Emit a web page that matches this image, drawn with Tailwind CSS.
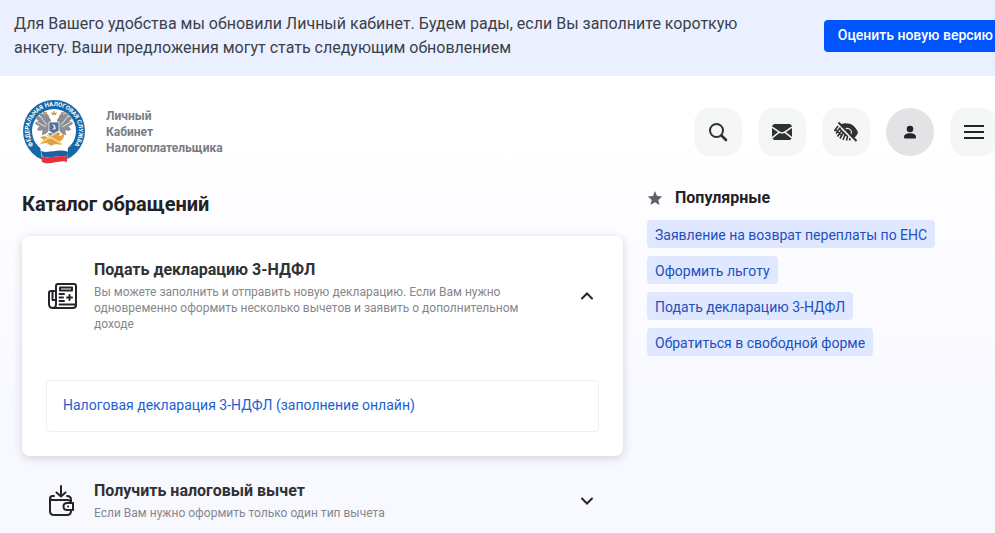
<!DOCTYPE html>
<html lang="ru">
<head>
<meta charset="utf-8">
<meta name="viewport" content="width=device-width, initial-scale=1">
<title>Каталог обращений</title>
<script src="https://cdn.jsdelivr.net/npm/@tailwindcss/browser@4"></script>
</head>
<body class="min-h-screen overflow-hidden bg-linear-to-b from-white from-25% to-[#f8f9ff] to-75% font-[Roboto,'Liberation_Sans',sans-serif] text-[#212224]">

<aside class="flex items-start justify-between bg-[#eaf0ff] pt-3 pb-4 pl-3.5">
  <p class="max-w-[750px] text-base leading-6 text-[#3c4048]">Для Вашего удобства мы обновили Личный кабинет. Будем рады, если Вы заполните короткую анкету. Ваши предложения могут стать следующим обновлением</p>
  <button type="button" class="mt-2 -mr-3 h-8 shrink-0 rounded bg-[#0055ff] px-3.5 pb-0.5 text-sm font-medium whitespace-nowrap text-white">Оценить новую версию</button>
</aside>

<header class="flex items-center justify-between pt-6 pb-5 pl-[22px]">
  <a href="#" class="flex items-center gap-5">
    <svg class="size-16 shrink-0" viewBox="0 0 64 64" role="img" aria-label="Федеральная налоговая служба">
      <defs>
        <path id="ring" d="M14 48.200A24.900 24.900 0 1 1 50 48.200"/>
      </defs>
      <circle cx="32" cy="31" r="31" fill="#1768a8"/>
      <circle cx="32" cy="31" r="22" fill="#fff"/>
      <text font-family="Roboto, 'Liberation Sans', sans-serif" font-size="6" font-weight="700" fill="#fff"><textPath href="#ring" startOffset="50%" text-anchor="middle">ФЕДЕРАЛЬНАЯ НАЛОГОВАЯ СЛУЖБА</textPath></text>
      <g fill="#8b8e94">
        <path d="M29 20c-3-4-8-7-12-7 0 2 1 3 2 4-2-1-4-1-5 0 0 2 1 3 3 4-2 0-3 1-4 2 1 2 3 3 5 3-2 1-2 2-3 4 2 1 4 1 6 0-1 2-1 3-1 5 3 0 6-3 8-6z"/>
        <path d="M35 20c3-4 8-7 12-7 0 2-1 3-2 4 2-1 4-1 5 0 0 2-1 3-3 4 2 0 3 1 4 2-1 2-3 3-5 3 2 1 2 2 3 4-2 1-4 1-6 0 1 2 1 3 1 5-3 0-6-3-8-6z"/>
        <path d="M27 17c0-2-2-4-4-3l-2 2 3 1 1 4h14l1-4 3-1-2-2c-2-1-4 1-4 3l-2 4h-6zM26 33l6 12 6-12z"/>
      </g>
      <path d="M18 16l7 9M15 22l9 5M46 16l-7 9M49 22l-9 5" fill="none" stroke="#e1e3e6" stroke-width="1"/>
      <path d="M29 12l1 3h4l1-3-2 1-1-3-1 3zM21 12h4v2h-4zM39 12h4v2h-4z" fill="#c9a261"/>
      <path d="M27 22h10v9l-5 3-5-3z" fill="#526f9e" stroke="#f5f5f5" stroke-width=".8"/>
      <path d="M30 24l3 1 1 4-4 1 2-3z" fill="#d8dde7"/>
      <path d="M18 37l5-1 5 3 6-6 4 3 5-3-2 6-4 3 3 3-7-1-4 2-4-3-7 1 4-4z" fill="#e5a13b"/>
      <path d="M20 42l17-11M25 35l15 9" fill="none" stroke="#f6d38a" stroke-width="1.5"/>
      <path d="M18 45c8 4 19-3 28 1l-1 16c-8-3-17 3-25-1z" fill="#fff"/>
      <path d="M19 51c8 3 18-3 27 1l-1 5c-9-3-17 3-25-1z" fill="#1861a5"/>
      <path d="M19 56c8 4 18-2 26 1v5c-8-3-17 4-25 0z" fill="#e5313c"/>
    </svg>
    <span class="text-xs leading-4 font-bold text-[#797c83]">Личный<br>Кабинет<br>Налогоплательщика</span>
  </a>
  <nav class="-mr-[3px] flex shrink-0 gap-4" aria-label="Меню">
    <button type="button" aria-label="Поиск" class="grid size-12 place-items-center rounded-2xl bg-[#f5f6f6]">
      <svg class="size-6" viewBox="0 0 24 24" fill="none" stroke="#303132" stroke-width="2" stroke-linecap="round"><circle cx="10.500" cy="10.500" r="6.500"/><path d="M15.500 15.500l4.500 4.500" stroke-width="2.600"/></svg>
    </button>
    <button type="button" aria-label="Сообщения" class="grid size-12 place-items-center rounded-2xl bg-[#f5f6f6]">
      <svg class="size-6" viewBox="0 0 24 24"><path d="M4 4h16l2 2v12l-2 2H4l-2-2V6z" fill="#303132"/><path d="M2 7.200l7 4.700q3 2 6 0l7-4.700M2 17.800l7-5.500M22 17.800l-7-5.500" fill="none" stroke="#f5f6f6" stroke-width="1.500"/></svg>
    </button>
    <button type="button" aria-label="Версия для слабовидящих" class="grid size-12 place-items-center rounded-2xl bg-[#f5f6f6]">
      <svg class="size-6" viewBox="0 0 24 24"><path d="M6 4.500c8-3 15 0 18 8-1 3-3 5-5 6l-2.500-2.500c2-3 2-6-1-7.500-2-1-4-1-5 0z" fill="#303132"/><path d="M11.500 9.500l4.500 4.500 1-2c0-2-3-4-5.500-2.500z" fill="#303132"/><path d="M4 6L.5 11M6.500 7.500L2 13.500M8 10l-4.500 6.500M9.500 12l-3.500 6.500M11 14.500L9 20M13.500 16.500l-1 4M16 18l-.5 2.500M2 10l6 6M5 8l9 9" stroke="#303132" stroke-width="1.600" fill="none"/><path d="M4 4l17 18" stroke="#f5f6f6" stroke-width="1"/><path d="M4.500 2.500l18 18.500" stroke="#303132" stroke-width="2"/></svg>
    </button>
    <button type="button" aria-label="Профиль" class="grid size-12 place-items-center rounded-full bg-[#e3e3e5]">
      <svg class="size-6" viewBox="0 0 24 24" fill="#242528"><circle cx="12" cy="9" r="3.300"/><path d="M6 17.200c0-3 2.500-4 6-4s6 1 6 4q0 1.300-1.200 1.300H7.200Q6 18.500 6 17.200z"/></svg>
    </button>
    <button type="button" aria-label="Открыть меню" class="grid size-12 place-items-center rounded-2xl bg-[#f5f6f6]">
      <svg class="size-6" viewBox="0 0 24 24" fill="none" stroke="#242528" stroke-width="2"><path d="M2 6h20M2 12h20M2 18h20"/></svg>
    </button>
  </nav>
</header>

<main class="grid grid-cols-[601fr_326fr] gap-6 px-[22px]">
  <section>
    <h1 class="pt-2 pb-5 text-xl leading-6 font-bold">Каталог обращений</h1>
    <article class="rounded-lg bg-white px-6 py-6 shadow-[0_2px_10px_rgba(30,30,60,0.18)]">
      <div class="flex items-center gap-4 pb-12">
        <svg class="size-8 shrink-0" viewBox="0 0 32 32" fill="none" stroke="#242528" stroke-width="2" stroke-linejoin="round" stroke-linecap="round"><path d="M10 24V6q0-2 2-2h16q2 0 2 2v19q0 3-3 3H7q-4 0-4-4V13q0-2 2-2h5M10 24q0 4-3 4M6.500 11v9H10M14 7.500h12v3H14zM13.500 14h4.500M13.500 17.500H17M13.500 21h4.500M13.500 24.500H29M23.500 15v5M21 17.500h5"/></svg>
        <div class="min-w-0 flex-1">
          <h2 class="text-base leading-5 font-bold text-[#303134]">Подать декларацию 3-НДФЛ</h2>
          <p class="mt-1 max-w-[440px] text-xs leading-4 text-[#85878e]">Вы можете заполнить и отправить новую декларацию. Если Вам нужно одновременно оформить несколько вычетов и заявить о дополнительном доходе</p>
        </div>
        <button type="button" aria-label="Свернуть" class="shrink-0"><svg class="size-6" viewBox="0 0 24 24" fill="none" stroke="#242528" stroke-width="2" stroke-linecap="round"><path d="M7 14.500l5-5 5 5"/></svg></button>
      </div>
      <a href="#" class="block rounded-sm border border-[#eeeff3] px-4 pt-3.5 pb-4 text-sm leading-5 text-[#1c61d2]">Налоговая декларация 3-НДФЛ (заполнение онлайн)</a>
    </article>
    <article class="flex items-center gap-4 px-6 py-[25px]">
      <svg class="size-8 shrink-0" viewBox="0 0 32 32" fill="none" stroke="#242528" stroke-width="2" stroke-linejoin="round" stroke-linecap="round"><path d="M15 1v10M10.500 7.500L15 11.500l4.500-4M8 11H6.500q-2.500 0-2.500 2.500V26q0 4 4 4h13q4 0 4-4M4 14q1 1 3 1h14q4 0 4 3V14.500q0-3.500-4-3.500M21 18h6v7h-6q-3.500 0-3.500-3.500T21 18zM22 21.500h.1"/></svg>
      <div class="min-w-0 flex-1">
        <h2 class="text-base leading-5 font-bold text-[#303134]">Получить налоговый вычет</h2>
        <p class="mt-1 text-xs leading-4 text-[#85878e]">Если Вам нужно оформить только один тип вычета</p>
      </div>
      <button type="button" aria-label="Развернуть" class="shrink-0"><svg class="size-6" viewBox="0 0 24 24" fill="none" stroke="#242528" stroke-width="2" stroke-linecap="round"><path d="M7 9.500l5 5 5-5"/></svg></button>
    </article>
  </section>
  <section class="pt-0.5">
    <h2 class="flex items-center gap-3 text-base leading-6 font-bold">
      <svg class="size-4" viewBox="0 0 16 16" fill="#606166"><path d="M8 1l2 5 5.300.400-4 3.500L12.500 15 8 12.200 3.500 15l1.200-5.100-4-3.500L6 6z"/></svg>
      Популярные
    </h2>
    <ul class="mt-2.5 flex flex-col items-start gap-2 text-sm leading-5 whitespace-nowrap text-[#2350bd]">
      <li><a href="#" class="block rounded-sm bg-[#dfe8ff] px-2 pt-[5px] pb-[3px]">Заявление на возврат переплаты по ЕНС</a></li>
      <li><a href="#" class="block rounded-sm bg-[#dfe8ff] px-2 pt-[5px] pb-[3px]">Оформить льготу</a></li>
      <li><a href="#" class="block rounded-sm bg-[#dfe8ff] px-2 pt-[5px] pb-[3px]">Подать декларацию 3-НДФЛ</a></li>
      <li><a href="#" class="block rounded-sm bg-[#dfe8ff] px-2 pt-[5px] pb-[3px]">Обратиться в свободной форме</a></li>
    </ul>
  </section>
</main>
</body>
</html>
